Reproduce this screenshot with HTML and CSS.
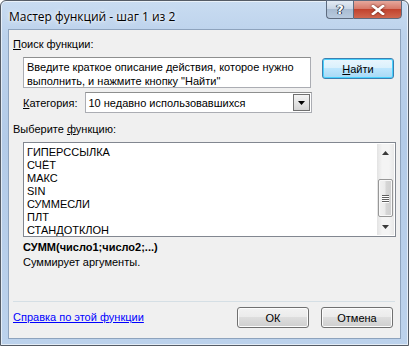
FILE: index.html
```
<!DOCTYPE html>
<html lang="ru">
<head>
<meta charset="utf-8">
<link rel="stylesheet" href="styles.css">
</head>
<body>
<div class="window">
  <div class="titlebar">
    <span class="title">Мастер функций - шаг 1 из 2</span>
    <div class="caption-btns">
      <div class="cap-btn help">?</div>
      <div class="cap-btn close">
        <svg width="14" height="10" viewBox="0 0 14 10"><path d="M2 1 L12 9 M12 1 L2 9" stroke="#fff" stroke-width="2.6" stroke-linecap="square" fill="none"/><path d="M2 1 L12 9 M12 1 L2 9" stroke="#fff" stroke-width="1.2" fill="none"/></svg>
      </div>
    </div>
  </div>
  <div class="client">
    <div class="label top-label"><u>П</u>оиск функции:</div>
    <div class="search-row">
      <div class="textarea">Введите краткое описание действия, которое нужно<br>выполнить, и нажмите кнопку "Найти"</div>
      <div class="button default"><u>Н</u>айти</div>
    </div>
    <div class="cat-row">
      <span class="label"><u>К</u>атегория:</span>
      <div class="combo">
        <span class="combo-text">10 недавно использовавшихся</span>
        <div class="combo-arrow"><svg width="7" height="4" viewBox="0 0 7 4"><path d="M0 0 H7 L3.5 4 Z" fill="#000"/></svg></div>
      </div>
    </div>
    <div class="label list-label">Выберите <u>ф</u>ункцию:</div>
    <div class="listbox">
      <ul class="items">
        <li>ГИПЕРССЫЛКА</li>
        <li>СЧЁТ</li>
        <li>МАКС</li>
        <li>SIN</li>
        <li>СУММЕСЛИ</li>
        <li>ПЛТ</li>
        <li>СТАНДОТКЛОН</li>
      </ul>
      <div class="scrollbar">
        <div class="arrow"><svg width="7" height="4" viewBox="0 0 7 4"><path d="M0 4 H7 L3.5 0 Z" fill="#3a3a3a"/></svg></div>
        <div class="track-top"></div>
        <div class="thumb"><span></span><span></span><span></span><span></span></div>
        <div class="track-bottom"></div>
        <div class="arrow"><svg width="7" height="4" viewBox="0 0 7 4"><path d="M0 0 H7 L3.5 4 Z" fill="#3a3a3a"/></svg></div>
      </div>
    </div>
    <div class="signature">СУММ(число1;число2;...)</div>
    <div class="desc">Суммирует аргументы.</div>
    <div class="separator"></div>
    <div class="bottom-row">
      <a class="link" href="#">Справка по этой функции</a>
      <div class="buttons">
        <div class="button">ОК</div>
        <div class="button">Отмена</div>
      </div>
    </div>
  </div>
</div>
</body>
</html>
```
FILE: styles.css
```
* { box-sizing: border-box; }
html, body { margin: 0; padding: 0; background: #fff; }
body {
  font-family: "Liberation Sans", Arial, sans-serif;
  font-size: 11px;
  color: #000;
}
.window {
  width: 409px;
  height: 346px;
  background: linear-gradient(180deg, #c9dcf1 0%, #bcd2ec 10%, #b3cbe8 40%, #bcd2ec 100%);
  border: 1px solid #555c66;
  border-radius: 6px 6px 0 0;
  padding: 0 7px 6px 7px;
  display: flex;
  flex-direction: column;
  box-shadow: inset 0 0 0 1px rgba(255,255,255,0.6);
}
.titlebar {
  height: 28px;
  display: flex;
  justify-content: space-between;
  align-items: flex-start;
}
.title {
  font-family: "Open Sans", "Liberation Sans", sans-serif;
  font-size: 12px;
  margin: 7px 0 0 1px;
  color: #000;
  text-shadow: 0 0 6px #fff, 0 0 3px #fff;
}
.caption-btns {
  display: flex;
  margin-right: -1px;
  margin-top: -1px;
}
.cap-btn {
  height: 19px;
  border: 1px solid #5d6b7f;
  display: flex;
  align-items: center;
  justify-content: center;
}
.help {
  width: 27px;
  border-radius: 0 0 0 4px;
  border-right: none;
  background: linear-gradient(180deg, #e3ebf4 0%, #c9d6e6 45%, #a9bcd2 50%, #b8cadf 100%);
  color: #fff;
  font-family: "DejaVu Sans", sans-serif;
  font-weight: bold;
  font-size: 13px;
  text-shadow: 0 0 1px #2a3b52, 0 0 1px #2a3b52, 1px 0 0 #2a3b52, -1px 0 0 #2a3b52;
}
.close {
  width: 49px;
  border-radius: 0 0 4px 0;
  background: linear-gradient(180deg, #e6a89c 0%, #d77a6a 45%, #c2432e 50%, #d0674f 100%);
}
.close svg { filter: drop-shadow(0 0 1px #5a1e14); }
.client {
  flex: 1;
  background: #f0f0f0;
  border: 1px solid #8ea3bd;
  padding: 0 5px 0 4px;
  display: flex;
  flex-direction: column;
}
.label { white-space: nowrap; }
.top-label { margin-top: 7px; line-height: 14px; }
.search-row {
  display: flex;
  align-items: flex-start;
  margin-top: 6px;
  padding-left: 10px;
}
.textarea {
  width: 288px;
  height: 31px;
  background: #fff;
  border: 1px solid #abadb3;
  border-top-color: #8e8f8f;
  padding: 2px 3px;
  line-height: 14px;
  white-space: nowrap;
}
.button {
  width: 72px;
  height: 21px;
  border: 1px solid #707070;
  border-radius: 3px;
  background: linear-gradient(180deg, #f2f2f2 0%, #ebebeb 49%, #dddddd 50%, #cfcfcf 100%);
  box-shadow: inset 0 0 0 1px #fcfcfc;
  display: flex;
  align-items: center;
  justify-content: center;
  line-height: 14px;
}
.search-row .button { margin-left: 11px; margin-top: 1px; }
.button.default {
  border-color: #3c7fb1;
  background: linear-gradient(180deg, #eaf6fd 0%, #d9f0fc 49%, #bee6fd 50%, #a7d9f5 100%);
  box-shadow: inset 0 0 0 1px #48d1fd;
}
.cat-row {
  display: flex;
  align-items: center;
  margin-top: 4px;
  padding-left: 10px;
}
.combo {
  margin-left: 7px;
  width: 227px;
  height: 21px;
  background: #fff;
  border: 1px solid #abadb3;
  border-top-color: #8e8f8f;
  display: flex;
  align-items: center;
  justify-content: space-between;
  padding-left: 3px;
}
.combo-arrow {
  width: 17px;
  height: 17px;
  margin-right: 1px;
  border: 1px solid #707070;
  background: linear-gradient(180deg, #f4f4f4 0%, #e4e4e4 50%, #d4d4d4 100%);
  display: flex;
  align-items: center;
  justify-content: center;
}
.list-label { margin-top: 9px; line-height: 14px; }
.listbox {
  margin: 6px 0 0 10px;
  width: 373px;
  height: 95px;
  background: #fff;
  border: 1px solid #828790;
  display: flex;
  padding: 1px;
}
.items {
  list-style: none;
  margin: 0;
  padding: 2px 0 0 2px;
  flex: 1;
}
.items li { line-height: 13px; height: 13px; }
.scrollbar {
  width: 17px;
  display: flex;
  flex-direction: column;
  background: linear-gradient(90deg, #e3e3e3 0%, #f4f4f4 30%, #f4f4f4 70%, #e8e8e8 100%);
}
.arrow {
  height: 17px;
  display: flex;
  align-items: center;
  justify-content: center;
}
.track-top { height: 18px; }
.track-bottom { flex: 1; }
.thumb {
  height: 38px;
  margin: 0 1px;
  border: 1px solid #979797;
  border-radius: 2px;
  background: linear-gradient(90deg, #f2f2f2 0%, #ebebeb 45%, #d6d6d6 55%, #cfcfcf 100%);
  box-shadow: inset 0 0 0 1px #f8f8f8;
  display: flex;
  flex-direction: column;
  align-items: center;
  justify-content: center;
  gap: 1px;
}
.thumb span {
  width: 7px;
  height: 1px;
  background: #5f5f5f;
  box-shadow: 0 1px 0 #fff;
}
.signature {
  margin: 3px 0 0 10px;
  font-weight: bold;
  line-height: 14px;
}
.desc {
  margin: 1px 0 0 10px;
  line-height: 14px;
}
.separator {
  margin: 32px 0 0 0;
  height: 1px;
  background: #d5dfe5;
  width: 382px;
}
.bottom-row {
  display: flex;
  justify-content: space-between;
  align-items: center;
  margin-top: 5px;
  width: 380px;
}
.link {
  color: #0000ff;
  text-decoration: underline;
  line-height: 14px;
  margin-top: -2px;
}
.buttons { display: flex; gap: 12px; }
.buttons .button { width: 72px; height: 21px; }
u { text-decoration: underline; }
```
